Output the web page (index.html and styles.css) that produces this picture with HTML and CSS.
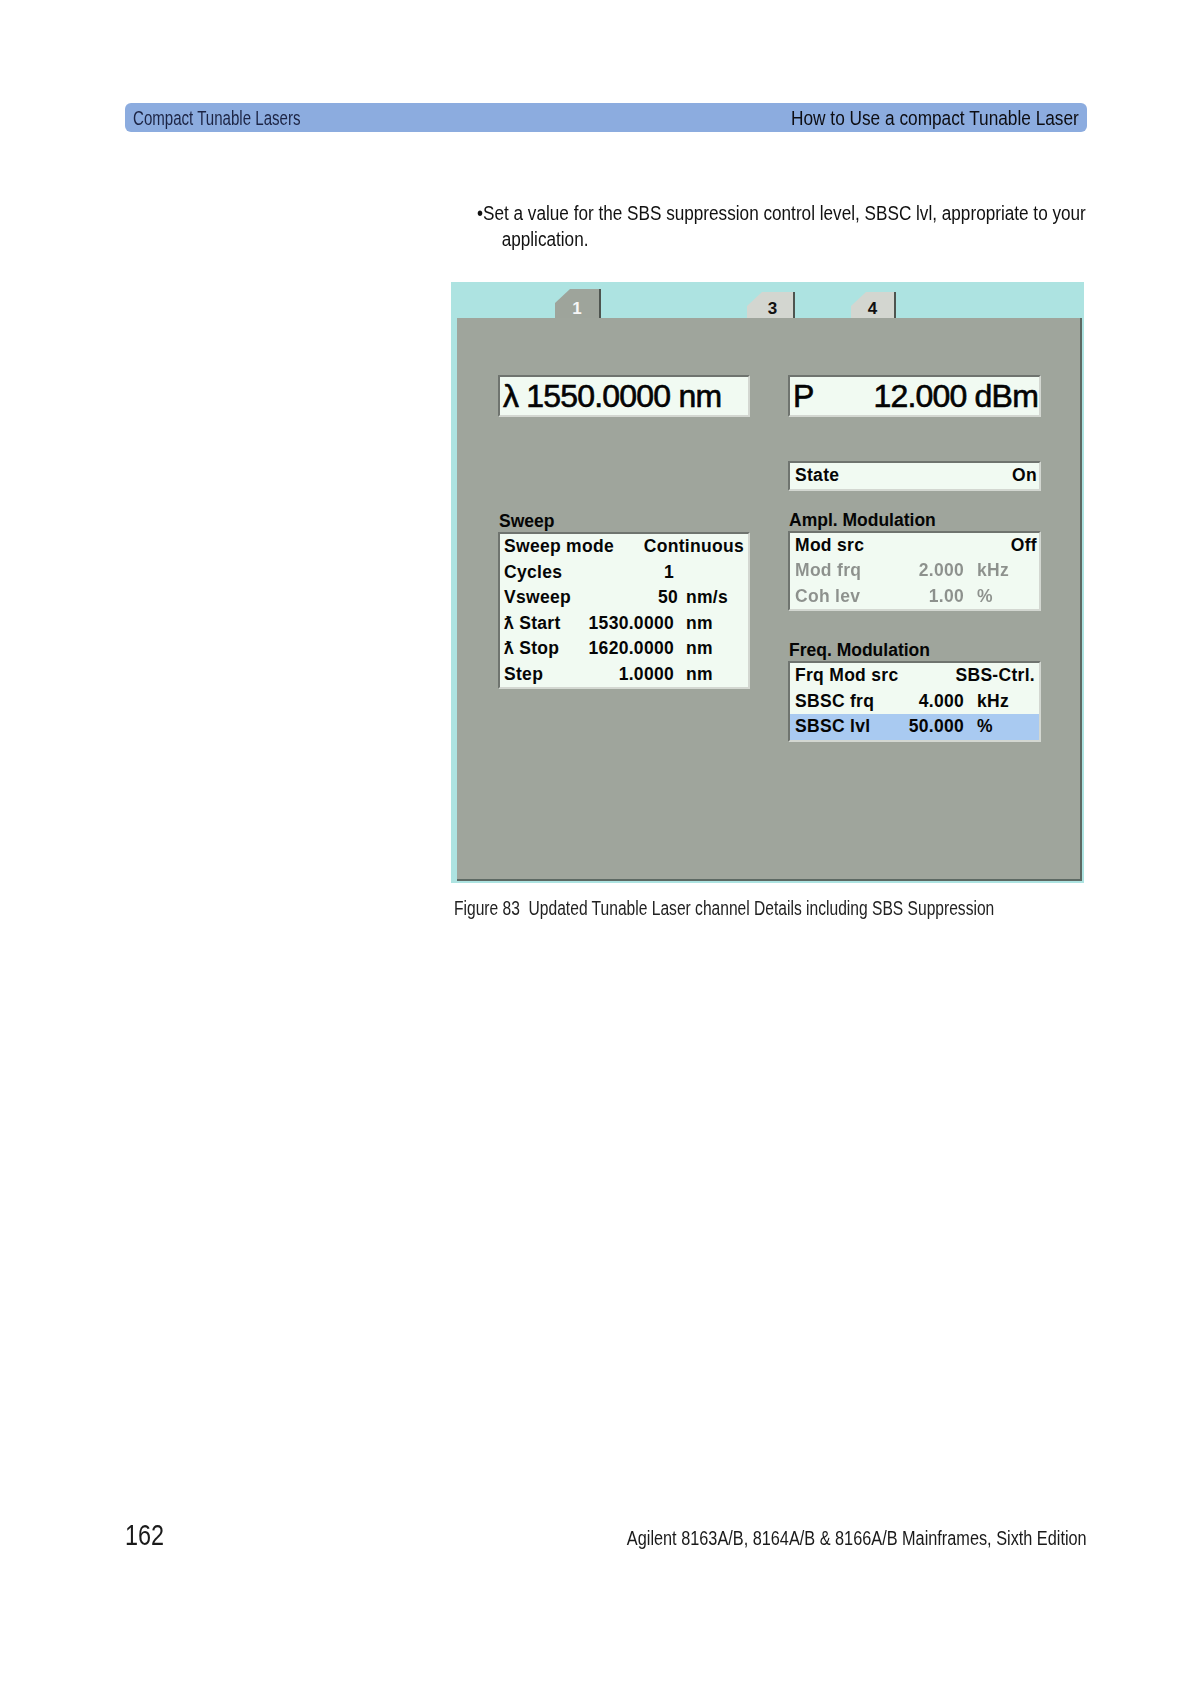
FILE: index.html
```html
<!DOCTYPE html>
<html>
<head>
<meta charset="utf-8">
<link rel="stylesheet" href="styles.css">
</head>
<body>
<div class="page">
  <div class="runhead">
    <span class="rh-left">Compact Tunable Lasers</span>
    <span class="rh-right">How to Use a compact Tunable Laser</span>
  </div>

  <p class="bullet">•Set a value for the SBS suppression control level, SBSC lvl, appropriate to your<br>application.</p>

  <div class="figure">
    <div class="tabs">
      <div class="tab tab-active">1</div>
      <div class="tab tab-light tab-3">3</div>
      <div class="tab tab-light tab-4">4</div>
    </div>
    <div class="panel">
      <div class="col">
        <div class="bigbox"><span>λ 1550.0000 nm</span></div>
        <div class="section-label sweep-label">Sweep</div>
        <div class="box">
          <div class="row"><span class="lbl">Sweep mode</span><span class="val span2">Continuous</span></div>
          <div class="row"><span class="lbl">Cycles</span><span class="val">1</span><span class="unit"></span></div>
          <div class="row"><span class="lbl">Vsweep</span><span class="val nudge">50</span><span class="unit">nm/s</span></div>
          <div class="row"><span class="lbl">ƛ Start</span><span class="val">1530.0000</span><span class="unit">nm</span></div>
          <div class="row"><span class="lbl">ƛ Stop</span><span class="val">1620.0000</span><span class="unit">nm</span></div>
          <div class="row"><span class="lbl">Step</span><span class="val">1.0000</span><span class="unit">nm</span></div>
        </div>
      </div>
      <div class="col col-right">
        <div class="bigbox"><span>P</span><span>12.000 dBm</span></div>
        <div class="box state-box">
          <div class="row rrow"><span class="lbl">State</span><span class="val span2">On</span></div>
        </div>
        <div class="section-label ampl-label">Ampl. Modulation</div>
        <div class="box">
          <div class="row rrow"><span class="lbl">Mod src</span><span class="val span2">Off</span></div>
          <div class="row rrow disabled"><span class="lbl">Mod frq</span><span class="val">2.000</span><span class="unit">kHz</span></div>
          <div class="row rrow disabled"><span class="lbl">Coh lev</span><span class="val">1.00</span><span class="unit">%</span></div>
        </div>
        <div class="section-label freq-label">Freq. Modulation</div>
        <div class="box">
          <div class="row rrow"><span class="lbl">Frq Mod src</span><span class="val span2 ctrl">SBS-Ctrl.</span></div>
          <div class="row rrow"><span class="lbl">SBSC frq</span><span class="val">4.000</span><span class="unit">kHz</span></div>
          <div class="row rrow selected"><span class="lbl">SBSC lvl</span><span class="val">50.000</span><span class="unit">%</span></div>
        </div>
      </div>
    </div>
  </div>

  <p class="caption">Figure 83&nbsp;&nbsp;Updated Tunable Laser channel Details including SBS Suppression</p>

  <div class="footer">
    <span class="pageno">162</span>
    <span class="edition">Agilent 8163A/B, 8164A/B &amp; 8166A/B Mainframes, Sixth Edition</span>
  </div>
</div>
</body>
</html>
```

FILE: styles.css
```css
* { box-sizing: border-box; }

body {
  margin: 0;
  background: #ffffff;
  font-family: "Liberation Sans", Arial, sans-serif;
  color: #1a1a1a;
}

.page {
  width: 1191px;
  height: 1684px;
  display: flex;
  flex-direction: column;
}

/* condensed look: Arial-metric text narrowed horizontally */
.rh-left, .rh-right, .pageno, .edition {
  display: inline-block;
  white-space: nowrap;
}

/* running head */
.runhead {
  margin: 103px 0 0 125px;
  width: 962px;
  height: 29px;
  background: #8cacdf;
  border-radius: 6px;
  display: flex;
  justify-content: space-between;
  align-items: center;
  padding: 0 8px;
  font-size: 20.5px;
}
.rh-left {
  color: #1c2444;
  transform: scaleX(0.735);
  transform-origin: left center;
}
.rh-right {
  color: #0d0d12;
  transform: scaleX(0.842);
  transform-origin: right center;
}

.bullet {
  margin: 68px 0 0 477px;
  width: 760px;
  padding-left: 28px;
  text-indent: -28px;
  font-size: 19.5px;
  line-height: 26px;
  color: #111;
  white-space: nowrap;
  transform: scaleX(0.88);
  transform-origin: left top;
}

/* instrument screen */
.figure {
  margin: 30px 0 0 451px;
  width: 633px;
  height: 601px;
  background: #ade3e1;
  display: flex;
  flex-direction: column;
  padding: 0 2px 2px 6px;
}

.tabs {
  height: 36px;
  display: flex;
  align-items: flex-end;
  padding-left: 98px;
}
.tab {
  width: 46px;
  height: 29px;
  border-right: 2px solid #4e544f;
  clip-path: polygon(15px 0, 100% 0, 100% 100%, 0 100%, 0 14px);
  font-weight: 700;
  font-size: 17px;
  text-align: center;
  padding-top: 10px;
  line-height: 20px;
  color: #111;
}
.tab-active {
  background: #9ea49b;
  color: #f6f6f6;
}
.tab-light {
  height: 26px;
  padding-top: 7px;
  background: #d3d6d0;
}
.tab-3 { width: 48px; margin-left: 146px; padding-left: 5px; }
.tab-4 { width: 45px; margin-left: 56px; }

.panel {
  flex: 1;
  background: #9fa59c;
  border-right: 2px solid #5d6963;
  border-bottom: 2px solid #5d6963;
  display: flex;
  gap: 38px;
  padding: 57px 0 0 41px;
  font-weight: 700;
  font-size: 17.5px;
  color: #050505;
}

.col {
  width: 252px;
  display: flex;
  flex-direction: column;
}
.col-right { width: 253px; }

.bigbox {
  height: 42px;
  background: #f1faf2;
  border-top: 2px solid #6f746f;
  border-left: 2px solid #6f746f;
  border-right: 2px solid #d3d7d1;
  border-bottom: 2px solid #d3d7d1;
  font-weight: 400;
  font-size: 32px;
  letter-spacing: -0.8px;
  line-height: 38px;
  padding: 0 1px 0 3px;
  -webkit-text-stroke: 0.6px #000;
  display: flex;
  justify-content: space-between;
  white-space: nowrap;
}

.box {
  background: #f1faf2;
  border-top: 2px solid #6f746f;
  border-left: 2px solid #6f746f;
  border-right: 2px solid #d3d7d1;
  border-bottom: 2px solid #d3d7d1;
}

.state-box { margin-top: 44px; }

.section-label {
  height: 20px;
  line-height: 18px;
  padding-left: 1px;
}
.sweep-label { margin-top: 95px; }
.ampl-label { margin-top: 20px; }
.freq-label { margin-top: 30px; }

.row {
  display: grid;
  grid-template-columns: auto 1fr 70px;
  height: 25.5px;
  line-height: 25.5px;
  padding: 0 4px;
  letter-spacing: 0.3px;
  white-space: nowrap;
}
.rrow {
  grid-template-columns: auto 1fr 73px;
  padding: 0 2px 0 5px;
}
.lbl { grid-column: 1; }
.val { grid-column: 2; text-align: right; }
.unit { grid-column: 3; padding-left: 12px; }
.rrow .unit { padding-left: 13px; }
.span2 { grid-column: 2 / 4; }
.ctrl { padding-right: 2px; }
.nudge { margin-right: -4px; }

/* greyed, dotted-looking disabled entries */
.disabled span {
  color: transparent;
  background-image: radial-gradient(circle, #8d918d 50%, rgba(141,145,141,0.25) 60%);
  background-size: 2px 2px;
  -webkit-background-clip: text;
  background-clip: text;
}
.selected { background: #a9caf1; }

.caption {
  margin: 13px 0 0 454px;
  font-size: 19.5px;
  line-height: 24px;
  color: #222;
  white-space: nowrap;
  transform: scaleX(0.8);
  transform-origin: left top;
}

.footer {
  margin: auto 104px 132px 125px;
  display: flex;
  justify-content: space-between;
  align-items: baseline;
}
.pageno {
  font-size: 30px;
  color: #1a1a1a;
  transform: scaleX(0.78);
  transform-origin: left bottom;
}
.edition {
  font-size: 19.5px;
  color: #1a1a1a;
  transform: scaleX(0.835);
  transform-origin: right bottom;
}
```
